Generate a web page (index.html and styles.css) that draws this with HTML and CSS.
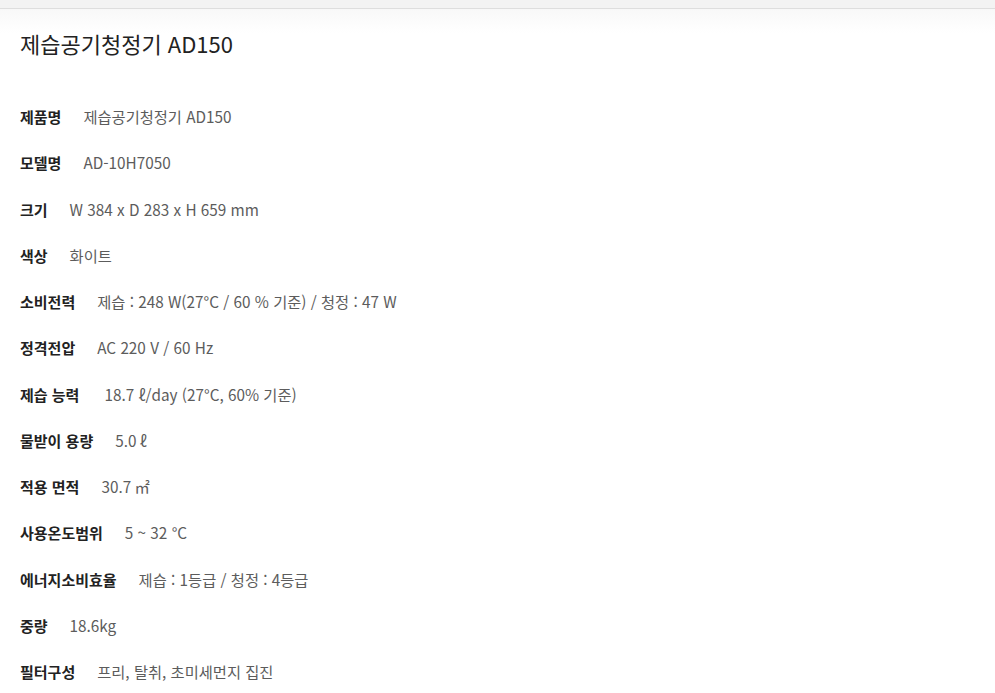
FILE: index.html
```html
<!DOCTYPE html>
<html lang="ko">

<head>
	<meta charset="UTF-8" />
	<meta name="viewport" content="width=device-width, initial-scale=1.0" />
	<title>제습공기청정기 AD150</title>
	<link rel="stylesheet" href="styles.css">
</head>

<body>
	<div class="topbar"></div>
	<div class="page">
		<h1 class="title">제습공기청정기 AD150</h1>
		<ul class="spec">
			<li><strong>제품명</strong><span>제습공기청정기 AD150</span></li>
			<li><strong>모델명</strong><span>AD-10H7050</span></li>
			<li><strong>크기</strong><span>W 384 x D 283 x H 659 mm</span></li>
			<li><strong>색상</strong><span>화이트</span></li>
			<li><strong>소비전력</strong><span>제습 : 248 W(27°C / 60 % 기준) / 청정 : 47 W</span></li>
			<li><strong>정격전압</strong><span>AC 220 V / 60 Hz</span></li>
			<li><strong>제습 능력</strong><span>&#8201;18.7 ℓ/day (27°C, 60% 기준)</span></li>
			<li><strong>물받이 용량</strong><span>5.0 ℓ</span></li>
			<li><strong>적용 면적</strong><span>30.7 ㎡</span></li>
			<li><strong>사용온도범위</strong><span>5 ~ 32 °C</span></li>
			<li><strong>에너지소비효율</strong><span>제습 : 1등급 / 청정 : 4등급</span></li>
			<li><strong>중량</strong><span>18.6kg</span></li>
			<li><strong>필터구성</strong><span>프리, 탈취, 초미세먼지 집진</span></li>
		</ul>
	</div>
</body>

</html>
```

FILE: styles.css
```css
* {
	padding: 0px;
	margin: 0px;
	list-style: none;
}

body {
	font-family: "Noto Sans CJK KR", "Noto Sans", sans-serif;
	color: #333;
	background: #fff;
}

.topbar {
	height: 8px;
	background-color: #f3f3f3;
	border-bottom: 1px solid #dedede;
}

.page {
	padding: 19px 20px 0;
	background: linear-gradient(#f8f8f8, #fff 24px);
}

.title {
	font-size: 22px;
	font-weight: 400;
	line-height: 30px;
	color: #222;
}

.spec {
	margin-top: 48px;
}

.spec li {
	display: flex;
	align-items: baseline;
	gap: 22px;
	line-height: 21px;
	margin-bottom: 25.25px;
}

.spec strong {
	font-size: 15px;
	font-weight: 700;
	color: #222;
}

.spec span {
	font-size: 15.3px;
	color: #5c5c5c;
}
```
